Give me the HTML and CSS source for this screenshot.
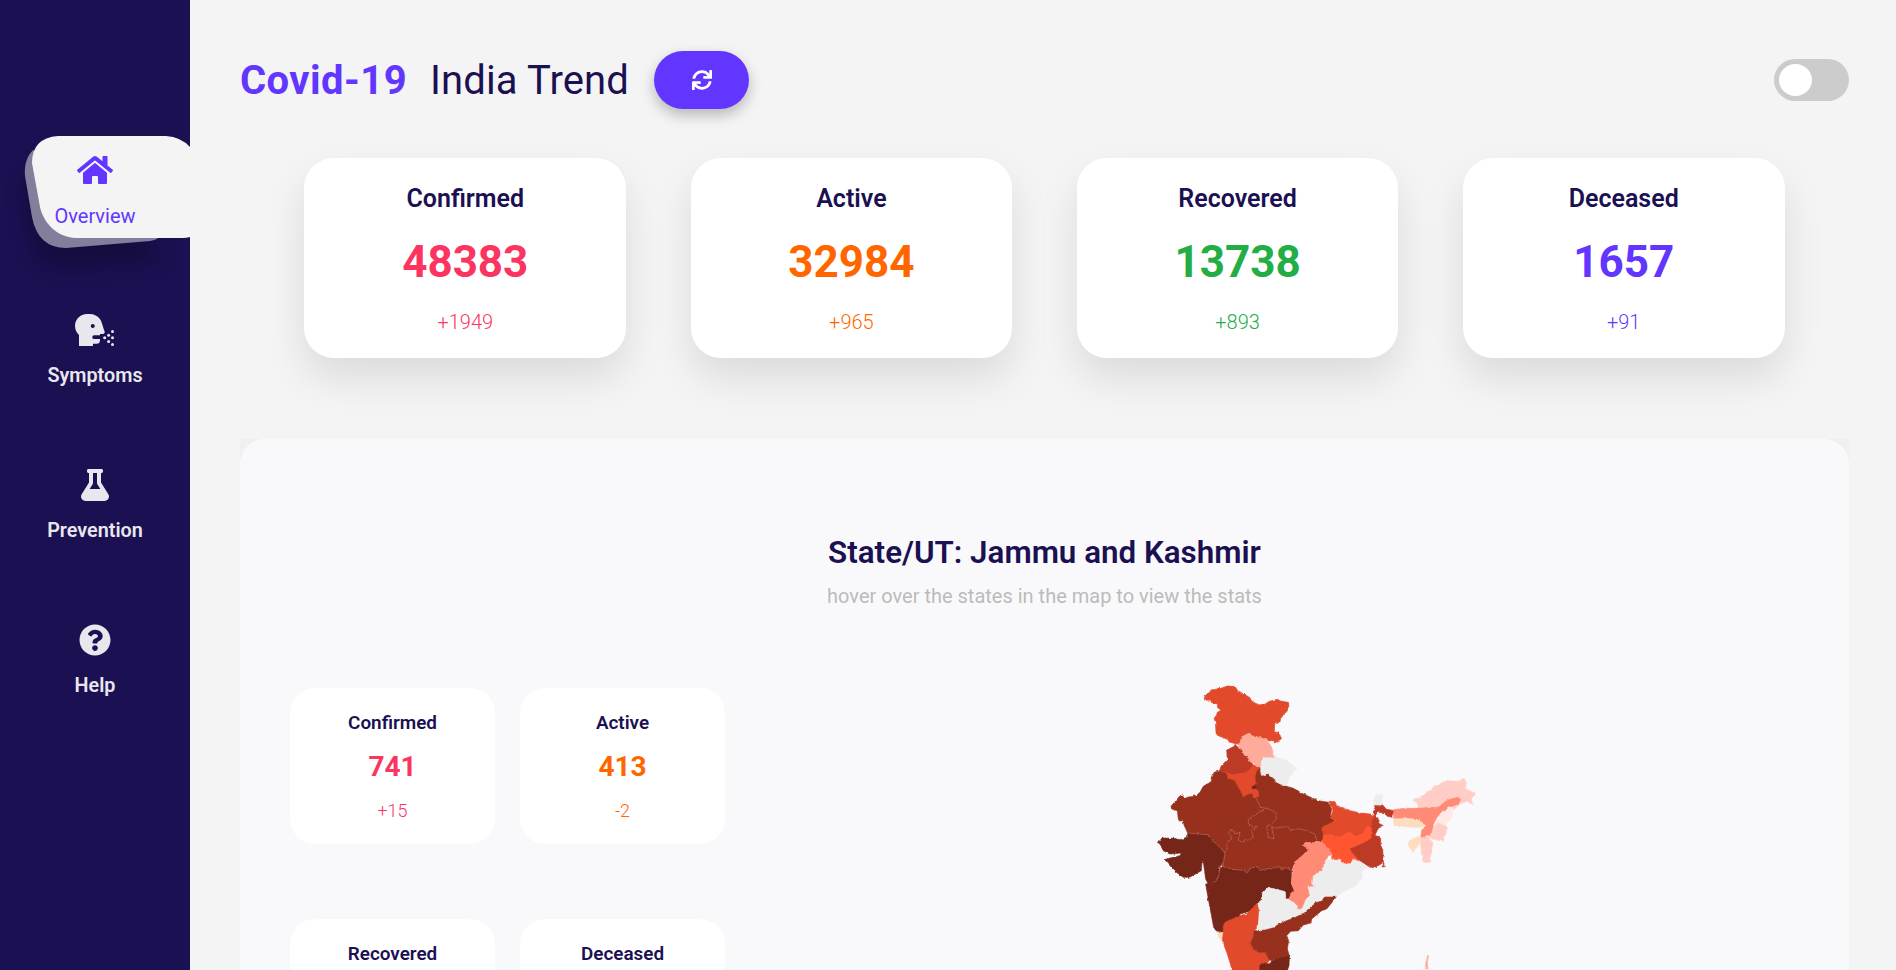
FILE: index.html
```html
<!DOCTYPE html>
<html lang="en">
<head>
<meta charset="utf-8">
<title>Covid-19 India Trend</title>
<link rel="stylesheet" href="styles.css">
</head>
<body>
<nav class="sidebar">
  <a class="nav-item active">
    <svg class="tab-shape" width="190" height="170" viewBox="0 0 190 170">
      <path class="tab-back" d="M33 40C27 46 24 55 25 66L32 107Q38 138 66 138L150 131Q156 130 160 127L100 60Z"/>
      <path class="tab-front" d="M58 26H166Q181 27 190 37V127Q187 128 183 128H76C55 127 43 111 40 97L32 53Q32 28 58 26Z"/>
    </svg>
    <svg class="nav-icon" width="36" height="32" viewBox="0 0 576 512"><path d="M280.37 148.26L96 300.11V464a16 16 0 0 0 16 16l112.06-.29a16 16 0 0 0 15.92-16V368a16 16 0 0 1 16-16h64a16 16 0 0 1 16 16v95.64a16 16 0 0 0 16 16.05L464 480a16 16 0 0 0 16-16V300L295.67 148.26a12.19 12.19 0 0 0-15.3 0zM571.6 251.47L488 182.56V44.05a12 12 0 0 0-12-12h-56a12 12 0 0 0-12 12v72.61L318.47 43a48 48 0 0 0-61 0L4.34 251.47a12 12 0 0 0-1.6 16.9l25.5 31A12 12 0 0 0 45.15 301l235.22-193.74a12.19 12.19 0 0 1 15.3 0L530.9 301a12 12 0 0 0 16.9-1.6l25.5-31a12 12 0 0 0-1.7-16.93z"/></svg>
    <span class="nav-label">Overview</span>
  </a>
  <a class="nav-item">
    <svg class="nav-icon" width="40" height="32" viewBox="0 0 640 512"><path fill-rule="evenodd" d="M473 275C452 228 429 123 404 88A208 208 0 0 0 234 0H192C86 0 0 86 0 192c0 56.800 24.700 107.600 64 142.900V512H287V475H344a56 56 0 0 0 56-56V400H306a29 29 0 0 1 0-59H400V320h46a32 32 0 0 0 27-45zM284 224a32 32 0 1 1 0-64 32 32 0 0 1 0 64z"/><circle cx="600" cy="280" r="24"/><circle cx="538" cy="338" r="24"/><circle cx="474" cy="380" r="24"/><circle cx="600" cy="380" r="24"/><circle cx="538" cy="438" r="24"/><circle cx="600" cy="486" r="24"/></svg>
    <span class="nav-label">Symptoms</span>
  </a>
  <a class="nav-item">
    <svg class="nav-icon" width="28" height="32" viewBox="0 0 448 512"><path d="M437.2 403.5L320 215V64h8c13.3 0 24-10.7 24-24V24c0-13.3-10.7-24-24-24H120c-13.3 0-24 10.7-24 24v16c0 13.3 10.7 24 24 24h8v151L10.8 403.5C-18.5 450.6 15.3 512 70.900 512h306.200c55.700 0 89.400-61.500 60.100-108.500zM137.900 320l48.200-77.600c3.700-5.200 5.800-11.600 5.800-18.400V64h64v160c0 6.900 2.200 13.200 5.800 18.400l48.200 77.600h-172z"/></svg>
    <span class="nav-label">Prevention</span>
  </a>
  <a class="nav-item">
    <svg class="nav-icon" width="32" height="32" viewBox="0 0 512 512"><path d="M504 256c0 136.997-111.043 248-248 248S8 392.997 8 256C8 119.083 119.043 8 256 8s248 111.083 248 248zM262.655 90c-54.497 0-89.255 22.957-116.549 63.758-3.536 5.286-2.353 12.415 2.715 16.258l34.699 26.31c5.205 3.947 12.621 3.008 16.665-2.122 17.864-22.658 30.113-35.797 57.303-35.797 20.429 0 45.698 13.148 45.698 32.958 0 14.976-12.363 22.667-32.534 33.976C247.128 238.528 216 254.941 216 296v4c0 6.627 5.373 12 12 12h56c6.627 0 12-5.373 12-12v-1.333c0-28.462 83.186-29.647 83.186-106.667 0-58.002-60.165-102-116.531-102zM256 338c-25.365 0-46 20.635-46 46 0 25.364 20.635 46 46 46s46-20.636 46-46c0-25.365-20.635-46-46-46z"/></svg>
    <span class="nav-label">Help</span>
  </a>
</nav>
<main class="main">
  <header class="header">
    <h1 class="title"><span class="brand">Covid-19</span><span class="topic">India Trend</span></h1>
    <button class="refresh" aria-label="Refresh">
      <svg width="20" height="20" viewBox="0 0 512 512"><path d="M440.65 12.57l4 82.77A247.16 247.16 0 0 0 255.83 8C134.73 8 33.91 94.92 12.29 209.82A12 12 0 0 0 24.09 224h49.05a12 12 0 0 0 11.67-9.26 175.91 175.91 0 0 1 317-56.94l-101.46-4.86a12 12 0 0 0-12.57 12v47.41a12 12 0 0 0 12 12H500a12 12 0 0 0 12-12V12a12 12 0 0 0-12-12h-47.37a12 12 0 0 0-11.98 12.57zM255.83 432a175.61 175.61 0 0 1-146-77.8l101.8 4.87a12 12 0 0 0 12.57-12v-47.4a12 12 0 0 0-12-12H12a12 12 0 0 0-12 12V500a12 12 0 0 0 12 12h47.35a12 12 0 0 0 12-12.6l-4.15-82.57A247.17 247.17 0 0 0 255.83 504c121.11 0 221.93-86.92 243.55-201.82a12 12 0 0 0-11.8-14.18h-49.05a12 12 0 0 0-11.67 9.26A175.86 175.86 0 0 1 255.83 432z"/></svg>
    </button>
    <div class="switch"><div class="knob"></div></div>
  </header>
  <section class="totals">
    <article class="card confirmed"><h2>Confirmed</h2><strong>48383</strong><span>+1949</span></article>
    <article class="card in-care"><h2>Active</h2><strong>32984</strong><span>+965</span></article>
    <article class="card recovered"><h2>Recovered</h2><strong>13738</strong><span>+893</span></article>
    <article class="card deceased"><h2>Deceased</h2><strong>1657</strong><span>+91</span></article>
  </section>
  <section class="panel-wrap">
    <div class="panel">
      <h2 class="state-title">State/UT: Jammu and Kashmir</h2>
      <p class="hint">hover over the states in the map to view the stats</p>
      <div class="detail">
        <div class="state-cards">
          <article class="mini confirmed"><h3>Confirmed</h3><strong>741</strong><span>+15</span></article>
          <article class="mini in-care"><h3>Active</h3><strong>413</strong><span>-2</span></article>
          <article class="mini recovered"><h3>Recovered</h3></article>
          <article class="mini deceased"><h3>Deceased</h3></article>
        </div>
        <svg class="map" width="350" height="300" viewBox="0 0 1050 900">
          <defs><filter id="coast" x="0" y="0" width="1" height="1" color-interpolation-filters="sRGB"><feTurbulence type="fractalNoise" baseFrequency="0.09" numOctaves="2" seed="4"/><feDisplacementMap in="SourceGraphic" scale="8" xChannelSelector="R" yChannelSelector="G"/></filter></defs>
          <g filter="url(#coast)">
            <rect width="1050" height="920" fill="none"/>
            <polygon class="l7" points="238,306 222,310 213,338 190,352 180,370 168,380 134,387 128,378 120,380 93,412 95,420 112,425 115,450 118,456 130,455 132,468 143,492 205,497 222,518 250,545 255,555 250,570 245,590 285,602 312,604 320,612 335,595 355,595 358,604 375,602 400,596 420,598 425,603 440,597 455,605 463,580 485,562 507,540 490,530 495,520 525,520 548,515 550,500 552,475 585,455 570,445 575,420 565,400 535,395 490,375 460,358 425,348 405,330 385,312 366,318 360,295 345,290 310,312 277,317"/>
            <polygon class="l8" points="52,520 60,515 66,507 100,508 120,512 143,505 143,492 205,497 222,518 250,545 255,555 250,570 245,585 235,600 238,615 228,635 215,642 205,645 197,630 190,578 186,576 184,605 150,624 130,625 105,607 75,573 78,570 120,560 124,552 90,555 70,545 60,525"/>
            <polygon class="l8" points="238,600 248,592 285,602 312,604 320,612 335,595 355,595 358,604 375,602 400,596 420,598 425,603 440,597 455,605 453,645 465,668 462,690 450,695 435,690 436,668 385,655 368,672 362,700 345,712 335,725 300,735 297,747 255,762 250,790 245,792 230,787 221,775 205,690 197,645 215,642 228,635 238,615"/>
            <polygon class="l6" points="285,226 294,235 308,245 313,258 325,267 334,280 342,291 332,296 328,303 310,312 277,317 258,311 238,306 244,290 262,272 260,243 283,232"/>
            <polygon class="l5" points="258,311 277,317 310,312 328,303 332,296 342,288 350,293 360,295 350,305 345,320 346,345 338,350 348,362 356,368 356,385 340,386 338,372 322,376 310,384 303,366 292,350 285,334 265,328"/>
            <polygon class="l8" points="336,352 346,350 347,359 338,360"/>
            <polygon class="l5" points="193,85 197,78 208,72 213,63 232,60 236,54 240,59 262,51 285,52 292,64 330,86 333,95 354,107 372,107 388,97 412,91 422,96 445,100 447,108 440,128 422,148 420,160 404,165 403,188 418,192 424,210 404,222 398,215 385,215 378,208 368,210 362,203 346,205 328,193 305,203 300,222 290,225 264,218 262,211 232,199 228,190 226,158 222,147 228,143 232,130 243,124 232,115 233,105 215,101 212,93 194,94"/>
            <polygon class="l3" points="305,203 328,193 346,205 362,203 368,210 378,208 398,240 398,256 404,267 388,266 372,267 365,275 363,292 350,293 340,283 330,278 325,267 313,258 308,245 294,235 300,222"/>
            <polygon class="l0" points="363,292 365,275 372,267 388,266 402,268 406,259 415,268 438,272 469,298 453,316 444,345 430,350 408,338 405,330 390,322 385,312 375,320 366,318 362,310"/>
            <polygon class="lt" points="230,788 250,791 247,813 238,806"/>
            <polygon class="l5" points="250,762 300,740 320,735 352,702 358,722 353,775 342,785 340,805 332,822 340,840 355,850 375,850 390,872 380,885 360,890 358,915 280,915 262,855 247,815 250,790"/>
            <polygon class="l0" points="385,655 405,660 436,668 437,690 450,690 475,718 490,720 490,733 460,748 440,753 412,768 402,776 375,783 355,783 358,722 354,702 362,700 368,672"/>
            <polygon class="l7" points="590,682 555,682 545,696 520,703 518,710 495,725 487,735 460,748 440,755 412,768 402,776 375,783 342,785 340,805 332,822 340,840 355,850 375,850 390,874 425,870 448,860 442,840 446,815 440,800 452,787 475,785 490,768 512,762 515,750 545,725 560,720 580,695"/>
            <polygon class="l8" points="358,915 360,885 390,884 395,876 445,860 448,865 447,890 438,915"/>
            <polygon class="l0" points="575,568 605,578 632,582 638,568 685,595 665,605 667,625 650,648 610,668 590,682 555,682 520,703 495,728 487,733 475,718 508,685 502,650 515,648 518,620 545,605 552,580"/>
            <polygon class="l4" points="495,520 525,522 548,515 560,520 570,540 582,555 565,560 552,580 545,605 530,612 518,620 515,648 523,652 502,650 508,680 497,690 485,718 478,720 465,702 447,690 455,670 463,665 455,645 458,605 463,580 485,562 507,540 490,530"/>
            <polygon class="l5" points="567,397 585,398 590,410 630,425 662,432 690,435 705,440 695,460 702,468 690,475 675,480 670,495 645,502 628,490 600,505 570,498 550,500 548,475 587,455 570,445 580,425"/>
            <polygon class="l5b" points="550,500 570,498 600,505 628,490 645,502 670,495 675,480 690,470 697,478 695,510 675,520 650,530 630,540 640,555 663,575 655,575 638,568 632,582 605,582 603,570 575,568 578,555 570,540 548,520"/>
            <polygon class="l6" points="630,540 675,520 695,508 697,478 690,470 700,470 695,460 705,440 700,430 705,415 703,408 728,408 738,420 760,425 762,432 757,445 742,442 735,432 712,430 705,442 718,455 715,462 730,470 715,478 705,498 722,508 722,530 728,538 730,580 715,590 690,595 660,575 640,555"/>
            <path class="l6" d="M729 580l4 5-3 4zM727 590h6v4h-6zM705 590h4v4h-4z"/>
            <polygon class="l0" points="708,378 727,376 728,390 724,408 703,408 702,395"/>
            <polygon class="l2" points="820,390 840,388 855,375 880,355 920,335 958,337 972,328 980,345 975,360 990,365 1007,375 993,390 1000,408 990,405 985,395 960,405 940,423 938,415 962,400 955,385 925,392 895,415 835,418 833,400 820,395"/>
            <polygon class="l4" points="760,422 795,418 825,418 895,415 925,392 955,385 962,392 955,405 930,415 905,430 890,450 880,470 878,490 870,500 860,498 850,508 842,505 845,485 855,470 845,460 820,448 790,450 765,455"/>
            <polygon class="lt" points="762,450 800,448 830,452 850,462 855,470 845,475 825,475 765,470 760,460"/>
            <polygon class="l1" points="905,430 930,415 938,418 935,450 915,468 895,462 880,470 890,450"/>
            <polygon class="l2" points="880,475 895,462 922,475 910,517 878,510 868,505 875,495"/>
            <polygon class="l2" points="842,508 865,500 868,510 878,520 875,545 868,580 852,580 845,555 842,530"/>
            <polygon class="lt" points="805,520 820,508 842,503 842,520 825,540 820,550 805,530"/>
            <polygon class="l3" points="862,860 866,860 862,880 864,900 855,898 858,880"/>
            <path class="border" d="M348 388L362 415L355 422M362 415L385 420L408 430V450L395 465L380 472L385 505L402 510L395 475L405 478L440 472L455 482L480 480L500 485L525 495L530 515M375 418L325 450V465L338 472H352L335 485L340 507L305 520L295 510L300 490L285 495L275 480L268 490L275 510L260 520L262 540L250 555"/>
            <path class="border" d="M143 492L205 497L222 518L250 545L255 555L248 592L238 600V615L228 635L215 642M248 592L285 602L312 604L320 612L335 595L355 595L358 604L400 596L440 597L455 605"/>
          </g>
        </svg>
      </div>
    </div>
  </section>
</main>
</body>
</html>
```
FILE: styles.css
```css
* { box-sizing: border-box; margin: 0; padding: 0; }
body { display: flex; height: 100vh; overflow: hidden; font-family: Roboto, sans-serif; background: #f4f4f4; color: #1b1052; }

/* Sidebar */
.sidebar { width: 190px; height: 970px; flex: none; padding-top: 154px; background: #1b1052; color: #e8e7ee; display: flex; flex-direction: column; }
.nav-item { position: relative; height: 155px; display: flex; flex-direction: column; align-items: center; gap: 18px; }
.nav-item.active { height: 160px; color: #6236ff; }
.nav-icon { fill: currentColor; position: relative; flex: none; }
.nav-label { font-size: 19.8px; line-height: 24px; font-weight: 600; position: relative; }
.active .nav-label { font-size: 20px; font-weight: 400; }
.tab-shape { position: absolute; left: 0; top: -44px; overflow: visible; }
.tab-back { fill: #847d9b; filter: drop-shadow(0 20px 10px rgba(0, 0, 0, 0.25)); }
.tab-front { fill: #f4f4f4; }

/* Header */
.main { flex: 1; height: 970px; padding: 51px 47px 0 50px; overflow: hidden; }
.header { display: flex; align-items: center; height: 58px; }
.title { display: flex; gap: 23px; padding-top: 1px; font-size: 40px; line-height: 48px; font-weight: 400; }
.brand { font-weight: 700; letter-spacing: 0.45px; color: #6236ff; }
.topic { letter-spacing: 0.12px; }
.refresh { width: 95px; height: 58px; margin-left: 25px; border: 0; border-radius: 30px; background: #6236ff; box-shadow: 0 6px 14px rgba(0, 0, 0, 0.25); display: flex; align-items: center; justify-content: center; }
.refresh svg { fill: #fff; }
.switch { margin-left: auto; width: 75px; height: 42px; padding: 5px; border-radius: 21px; background: #ccc; }
.knob { width: 33px; height: 32px; border-radius: 50%; background: #fff; }

/* Country totals */
.totals { display: flex; justify-content: space-evenly; margin-top: 49px; }
.card { width: 20%; height: 200px; padding-top: 26px; border-radius: 30px; background: #fff; box-shadow: 0 20px 40px rgba(0, 0, 0, 0.1); display: flex; flex-direction: column; align-items: center; }
.card h2 { font-size: 25px; line-height: 30px; font-weight: 600; color: #1b1052; }
.card strong { margin-top: 21px; font-size: 44px; line-height: 54px; font-weight: 700; }
.card span { margin-top: 21px; font-size: 20px; line-height: 24px; font-weight: 300; }
.confirmed { color: #fb3560; }
.in-care { color: #ff6600; }
.recovered { color: #22ae45; }
.deceased { color: #6236ff; }

/* State panel */
.panel-wrap { margin-top: 81px; background: #f0f0f2; }
.panel { height: 700px; padding: 95px 50px 0; border-radius: 25px; background: #f9f9fc; }
.state-title { font-size: 31.35px; line-height: 38px; font-weight: 600; text-align: center; }
.hint { margin-top: 12px; font-size: 20px; line-height: 24px; text-align: center; color: #bbb; }
.detail { display: flex; margin-top: 62px; }
.state-cards { display: grid; grid-template-columns: 205px 205px; grid-auto-rows: 156px; gap: 75px 25px; margin-top: 18px; }
.mini { padding-top: 23px; border-radius: 25px; background: #fff; display: flex; flex-direction: column; align-items: center; }
.mini h3 { font-size: 18.9px; line-height: 23px; font-weight: 600; color: #1b1052; }
.mini strong { margin-top: 16px; font-size: 28px; line-height: 34px; font-weight: 700; }
.mini span { margin-top: 16px; font-size: 18px; line-height: 22px; font-weight: 300; }
.map { margin-left: 415px; margin-top: -1px; flex: none; overflow: visible; stroke-width: 2; }
.l0 { fill: #ededed; stroke: #ededed; }
.l1 { fill: #ffe8e5; stroke: #ffe8e5; }
.l2 { fill: #ffcdc5; stroke: #ffcdc5; }
.l3 { fill: #ffab9c; stroke: #ffab9c; }
.l4 { fill: #ff8a75; stroke: #ff8a75; }
.l5 { fill: #e34a2b; stroke: #e34a2b; }
.l5b { fill: #ff5631; stroke: #ff5631; }
.l6 { fill: #bd3a26; stroke: #bd3a26; }
.l7 { fill: #98301e; stroke: #98301e; }
.l8 { fill: #752619; stroke: #752619; }
.lt { fill: #fddcc0; stroke: #fddcc0; }
.border { fill: none; stroke: #c06a5c; stroke-width: 2; }
```
